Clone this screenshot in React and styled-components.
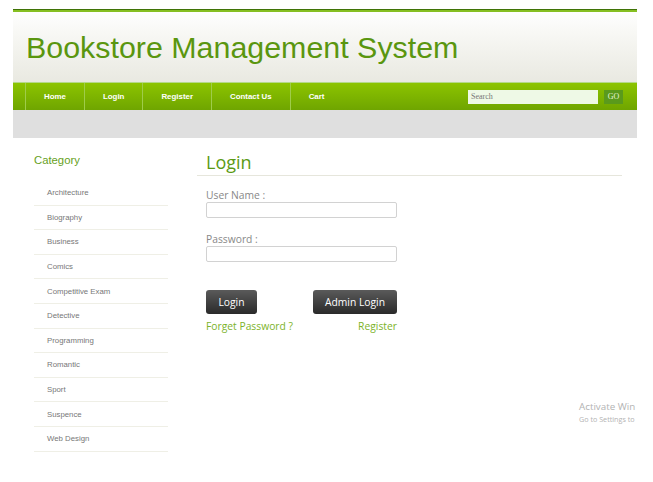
import styled, { createGlobalStyle } from 'styled-components';

const GlobalStyle = createGlobalStyle`
  html, body {
    margin: 0;
    padding: 0;
    background: #ffffff;
  }
  body {
    font-family: 'Liberation Sans', Arial, sans-serif;
  }
`;

const Page = styled.div`
  position: relative;
  width: 624px;
  margin: 9px 0 0 13px;
  height: 473px;
`;

const Header = styled.header`
  border-top: 1px solid #3f7306;
  box-shadow: inset 0 2px 0 #86bf22;
  height: 72px;
  padding: 0 13px;
  display: flex;
  align-items: center;
  background: linear-gradient(#ffffff 0%, #f6f6f2 40%, #e9e9e1 100%);
`;

const Title = styled.h1`
  margin: 3px 0 0;
  font-family: 'Liberation Sans', Arial, sans-serif;
  font-weight: 400;
  font-size: 30.4px;
  color: #5a960f;
`;

const NavBar = styled.nav`
  height: 27px;
  display: flex;
  align-items: stretch;
  padding-left: 12px;
  background: linear-gradient(#8cc400, #6fa500);
  border-top: 1px solid #b5d98a;
`;

const NavItem = styled.a`
  display: flex;
  align-items: center;
  padding: 0 18px;
  border-left: 1px solid #9fcc4a;
  color: #ffffff;
  font-size: 7.9px;
  font-weight: 700;
  text-decoration: none;
`;

const SearchForm = styled.div`
  margin-left: auto;
  display: flex;
  align-items: center;
  gap: 6px;
  padding-right: 14px;
`;

const SearchInput = styled.input`
  width: 130px;
  height: 14px;
  box-sizing: border-box;
  border: none;
  background: #eef9e6;
  padding: 0 3px;
  font-family: 'Liberation Serif', 'Times New Roman', serif;
  font-size: 8px;
  color: #777;
  outline: none;
  &::placeholder {
    color: #777;
  }
`;

const GoButton = styled.button`
  width: 19px;
  height: 14px;
  border: none;
  padding: 0;
  background: #5a9a1c;
  color: #e6f3d6;
  font-family: 'Liberation Serif', 'Times New Roman', serif;
  font-size: 8px;
`;

const Band = styled.div`
  height: 28px;
  background: #dfdfdf;
`;

const Content = styled.div`
  display: flex;
  padding-left: 21px;
`;

const Sidebar = styled.aside`
  width: 134px;
  padding-top: 16px;
`;

const SideTitle = styled.h3`
  margin: 0 0 14px;
  font-size: 11.3px;
  line-height: 13px;
  font-weight: 400;
  color: #679f1c;
`;

const CatList = styled.ul`
  list-style: none;
  margin: 0;
  padding: 0;
`;

const CatItem = styled.li`
  height: 24.6px;
  box-sizing: border-box;
  border-bottom: 1px solid #efefe6;
  display: flex;
  align-items: center;
  padding-left: 13px;
  font-size: 7.8px;
  color: #777777;
`;

const Main = styled.main`
  width: 425px;
  margin-left: 29px;
  padding-top: 13px;
  font-family: 'Open Sans', sans-serif;
`;

const Heading = styled.h2`
  margin: 0;
  padding: 0 0 2px 9px;
  font-family: 'Open Sans', sans-serif;
  font-weight: 400;
  font-size: 18px;
  line-height: 22px;
  color: #5b9a14;
  border-bottom: 1px solid #e6e6dc;
`;

const Form = styled.div`
  width: 191px;
  padding: 12px 0 0 9px;
`;

const Label = styled.label`
  display: block;
  font-size: 10.3px;
  line-height: 14px;
  color: #888888;
  margin-top: ${(p) => (p.$first ? '0' : '14px')};
`;

const TextInput = styled.input`
  display: block;
  width: 191px;
  height: 16px;
  box-sizing: border-box;
  border: 1px solid #d2d2d2;
  border-radius: 2px;
  background: #fff;
  outline: none;
`;

const ButtonRow = styled.div`
  display: flex;
  justify-content: space-between;
  margin-top: 28px;
`;

const DarkButton = styled.button`
  width: ${(p) => p.$w}px;
  height: 24px;
  border: none;
  border-radius: 3px;
  background: linear-gradient(#5a5a5a, #2a2a2a);
  color: #ffffff;
  font-family: 'Open Sans', sans-serif;
  font-size: 10.3px;
  padding: 0;
`;

const LinkRow = styled.div`
  display: flex;
  justify-content: space-between;
  margin-top: 5px;
  line-height: 14px;
`;

const GreenLink = styled.a`
  font-size: 10.3px;
  color: #7cb32a;
  text-decoration: none;
`;

const Watermark = styled.div`
  position: absolute;
  left: 566px;
  top: 391px;
  font-family: 'Open Sans', sans-serif;
  color: #b3b3b3;
  white-space: nowrap;
`;

const WmTitle = styled.div`
  font-size: 9.8px;
  line-height: 14px;
`;

const WmSub = styled.div`
  font-size: 7.2px;
  line-height: 11px;
`;

const navLinks = ['Home', 'Login', 'Register', 'Contact Us', 'Cart'];

const categories = [
  'Architecture',
  'Biography',
  'Business',
  'Comics',
  'Competitive Exam',
  'Detective',
  'Programming',
  'Romantic',
  'Sport',
  'Suspence',
  'Web Design',
];

export default function App() {
  return (
    <>
      <GlobalStyle />
      <Page>
        <Header>
          <Title>Bookstore Management System</Title>
        </Header>
        <NavBar>
          {navLinks.map((l) => (
            <NavItem key={l} href="#">
              {l}
            </NavItem>
          ))}
          <SearchForm>
            <SearchInput placeholder="Search" />
            <GoButton>GO</GoButton>
          </SearchForm>
        </NavBar>
        <Band />
        <Content>
          <Sidebar>
            <SideTitle>Category</SideTitle>
            <CatList>
              {categories.map((c) => (
                <CatItem key={c}>{c}</CatItem>
              ))}
            </CatList>
          </Sidebar>
          <Main>
            <Heading>Login</Heading>
            <Form>
              <Label $first>User Name :</Label>
              <TextInput type="text" />
              <Label>Password :</Label>
              <TextInput type="password" />
              <ButtonRow>
                <DarkButton $w={51}>Login</DarkButton>
                <DarkButton $w={84}>Admin Login</DarkButton>
              </ButtonRow>
              <LinkRow>
                <GreenLink href="#">Forget Password ?</GreenLink>
                <GreenLink href="#">Register</GreenLink>
              </LinkRow>
            </Form>
          </Main>
        </Content>
        <Watermark>
          <WmTitle>Activate Win</WmTitle>
          <WmSub>Go to Settings to</WmSub>
        </Watermark>
      </Page>
    </>
  );
}
